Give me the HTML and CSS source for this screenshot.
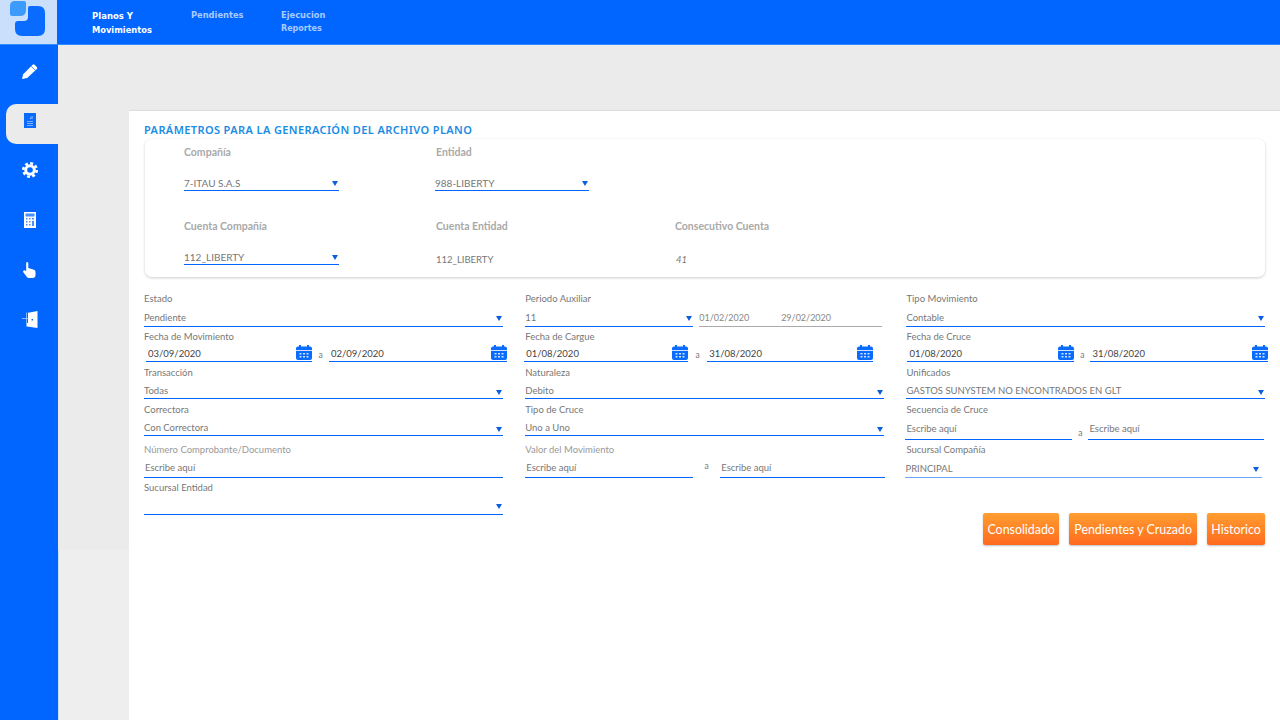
FILE: index.html
```html
<!DOCTYPE html>
<html lang="es">
<head>
  <meta charset="UTF-8">
  <meta name="viewport" content="width=device-width, initial-scale=1.0">
  <title>Parámetros archivo plano</title>
  <link rel="stylesheet" href="styles.css">
</head>
<body>
  <svg class="sprite" width="0" height="0">
    <symbol id="cal" viewBox="0 0 16 15">
      <path fill="#0a6cff" d="M0 3.5Q0 1.5 2 1.5H3V0H5V1.5H11V0H13V1.5H14Q16 1.5 16 3.5V13Q16 15 14 15H2Q0 15 0 13Z"/>
      <path fill="#fff" d="M0 5H16V5.8H0Z"/>
      <path fill="#cfe2ff" d="M3.5 8H5.5V9.6H3.5ZM7 8H9V9.6H7ZM10.5 8H12.5V9.6H10.5ZM3.5 11H5.5V12.6H3.5ZM7 11H9V12.6H7ZM10.5 11H12.5V12.6H10.5Z"/>
    </symbol>
  </svg>

  <header class="topbar">
    <div class="logo">
      <svg width="57" height="44" viewBox="0 0 57 44">
        <path fill="#0a6cff" d="M30 6H38Q45 6 45 13V29Q45 36 38 36H22Q15 36 15 29V24Q15 21 18 21H24Q28 21 28 17V8Q28 6 30 6Z"/>
        <path fill="#3d9bfb" d="M15 1H24Q26 1 26 3V10Q26 16 20 16H12Q10 16 10 14V6Q10 1 15 1Z"/>
      </svg>
    </div>
    <nav class="menu">
      <a class="menu-item active"><b>Planos Y</b><span>Movimientos</span></a>
      <a class="menu-item"><b>Pendientes</b></a>
      <a class="menu-item"><b>Ejecucion</b><span>Reportes</span></a>
    </nav>
  </header>

  <div class="layout">
    <aside class="sidebar">
      <div class="side-item">
        <svg width="16" height="16" viewBox="0 0 16 16"><path fill="#fff" d="M0 16L1.2 11.2L10.6 1.7Q11.6.8 12.6 1.7L14.8 3.9Q15.7 4.9 14.8 5.9L5.2 15Z"/><path stroke="#0066ff" stroke-width=".7" d="M9.2 3.2L13.2 7.2"/></svg>
      </div>
      <div class="side-item current">
        <svg width="12" height="15" viewBox="0 0 12 15"><path fill="#0a6cff" d="M0 0H12V15H0Z"/><path fill="#9cc4ff" d="M6 4.500H7V6H6ZM7.500 3H8.500V6H7.500ZM3 8H9V8.700H3ZM3 10H9V10.700H3ZM3 12H9V12.700H3Z"/></svg>
      </div>
      <div class="side-item">
        <svg width="16" height="16" viewBox="0 0 16 16"><circle cx="8" cy="8" r="4.300" fill="none" stroke="#fff" stroke-width="3"/><circle cx="8" cy="8" r="6.700" fill="none" stroke="#fff" stroke-width="2.600" stroke-dasharray="2.900 2.362"/></svg>
      </div>
      <div class="side-item">
        <svg width="12" height="16" viewBox="0 0 12 16"><path fill="#fff" d="M0 0H12V16H0Z"/><path fill="#0a6cff" d="M1.500 1.500H10.500V4.500H1.500ZM2 6H3.500V7.500H2ZM5 6H6.500V7.500H5ZM8 6H10V7.500H8ZM2 9H3.500V10.500H2ZM5 9H6.500V10.500H5ZM8 9H10V14H8ZM2 12H3.500V13.500H2ZM5 12H6.500V13.500H5Z" opacity=".75"/></svg>
      </div>
      <div class="side-item">
        <svg width="13" height="16" viewBox="0 0 13 16"><path fill="#fff" d="M3.200 1.200Q3.200 0 4.200 0T5.300 1.200V6L11 7.800Q12.500 8.300 12.500 10V13Q12.500 16 9.500 16H6Q4.500 16 3.500 14.500L.3 10.200Q-.3 9 .8 8.400T3.200 9.500Z"/></svg>
      </div>
      <div class="side-item">
        <svg width="16" height="17" viewBox="0 0 16 17"><path fill="#fff" d="M5 2L15.500 0V17L5 15.500V12H6V2Z"/><path fill="#0066ff" d="M9.500 8H11V9.500H9.500Z"/><path fill="none" stroke="#a9cdff" stroke-width=".8" d="M0 7.500H6.500M4.500 1.500V15.500"/></svg>
      </div>
    </aside>

    <div class="gutter"><div class="gutter-low"></div></div>

    <main class="content">
      <section class="panel">
        <h2 class="panel-title">PARÁMETROS PARA LA GENERACIÓN DEL ARCHIVO PLANO</h2>

        <div class="account-card">
          <div class="account-field">
            <label class="account-label">Compañía</label>
            <div class="select account-select">7-ITAU S.A.S</div>
          </div>
          <div class="account-field">
            <label class="account-label">Entidad</label>
            <div class="select account-select">988-LIBERTY</div>
          </div>
          <div></div>
          <div class="account-field">
            <label class="account-label">Cuenta Compañía</label>
            <div class="select account-select">112_LIBERTY</div>
          </div>
          <div class="account-field">
            <label class="account-label">Cuenta Entidad</label>
            <div class="account-value">112_LIBERTY</div>
          </div>
          <div class="account-field">
            <label class="account-label">Consecutivo Cuenta</label>
            <div class="account-value italic">41</div>
          </div>
        </div>

        <div class="filters">
          <div class="field">
            <label>Estado</label>
            <div class="select">Pendiente</div>
          </div>
          <div class="field">
            <label>Periodo Auxiliar</label>
            <div class="period">
              <div class="select">11</div>
              <div class="period-range"><span>01/02/2020</span><span>29/02/2020</span></div>
            </div>
          </div>
          <div class="field">
            <label>Tipo Movimiento</label>
            <div class="select">Contable</div>
          </div>

          <div class="field">
            <label>Fecha de Movimiento</label>
            <div class="dates dates-a">
              <div class="date">03/09/2020<svg width="16" height="15"><use href="#cal"/></svg></div>
              <span class="sep">a</span>
              <div class="date">02/09/2020<svg width="16" height="15"><use href="#cal"/></svg></div>
            </div>
          </div>
          <div class="field">
            <label>Fecha de Cargue</label>
            <div class="dates dates-b">
              <div class="date">01/08/2020<svg width="16" height="15"><use href="#cal"/></svg></div>
              <span class="sep">a</span>
              <div class="date">31/08/2020<svg width="16" height="15"><use href="#cal"/></svg></div>
            </div>
          </div>
          <div class="field">
            <label>Fecha de Cruce</label>
            <div class="dates dates-c">
              <div class="date">01/08/2020<svg width="16" height="15"><use href="#cal"/></svg></div>
              <span class="sep">a</span>
              <div class="date">31/08/2020<svg width="16" height="15"><use href="#cal"/></svg></div>
            </div>
          </div>

          <div class="field">
            <label>Transacción</label>
            <div class="select short">Todas</div>
          </div>
          <div class="field">
            <label>Naturaleza</label>
            <div class="select short">Debito</div>
          </div>
          <div class="field">
            <label>Unificados</label>
            <div class="select short">GASTOS SUNYSTEM NO ENCONTRADOS EN GLT</div>
          </div>

          <div class="field">
            <label>Correctora</label>
            <div class="select short">Con Correctora</div>
          </div>
          <div class="field">
            <label>Tipo de Cruce</label>
            <div class="select short">Uno a Uno</div>
          </div>
          <div class="field">
            <label>Secuencia de Cruce</label>
            <div class="inputs inputs-seq">
              <div class="input">Escribe aquí</div>
              <span class="sep">a</span>
              <div class="input">Escribe aquí</div>
            </div>
          </div>

          <div class="field">
            <label class="faint">Número Comprobante/Documento</label>
            <div class="input">Escribe aquí</div>
          </div>
          <div class="field">
            <label class="faint">Valor del Movimiento</label>
            <div class="inputs inputs-val">
              <div class="input">Escribe aquí</div>
              <span class="sep">a</span>
              <div class="input">Escribe aquí</div>
            </div>
          </div>
          <div class="field">
            <label>Sucursal Compañía</label>
            <div class="select pale">PRINCIPAL</div>
          </div>

          <div class="field">
            <label>Sucursal Entidad</label>
            <div class="select last"></div>
          </div>
          <div class="actions">
            <button class="btn">Consolidado</button>
            <button class="btn btn-wide">Pendientes y Cruzado</button>
            <button class="btn">Historico</button>
          </div>
        </div>
      </section>
    </main>
  </div>
</body>
</html>
```

FILE: styles.css
```css
* {
  box-sizing: border-box;
}
html, body {
  height: 100%;
}
body {
  margin: 0;
  background: #ebebeb;
  font-family: "Lato", "Open Sans", sans-serif;
  font-size: 9.5px;
  color: #666;
  overflow: hidden;
}
.sprite {
  display: block;
}

/* top bar */
.topbar {
  display: flex;
  height: 45px;
  background: #0066ff;
  border-bottom: 1px solid #2f8dff;
}
.logo {
  width: 57px;
  height: 44px;
  background: #c9dffb;
}
.logo svg {
  display: block;
}
.menu {
  display: flex;
  padding-left: 35px;
  font-family: "DejaVu Sans", sans-serif;
}
.menu-item {
  display: flex;
  flex-direction: column;
  gap: 2px;
  padding-top: 10px;
  color: #a9cbff;
  font-size: 8.3px;
  line-height: 11px;
  font-weight: bold;
}
.menu-item span {
  font-size: 8px;
}
.menu-item:nth-child(1) {
  width: 99px;
}
.menu-item:nth-child(2) {
  width: 90px;
}
.menu-item.active {
  color: #fff;
  padding-top: 11px;
}
.menu-item.active b {
  font-size: 8.5px;
}
.menu-item.active span {
  font-size: 8.3px;
  padding-top: 1px;
}

/* side menu */
.layout {
  display: flex;
  height: 675px;
}
.sidebar {
  width: 58px;
  flex: none;
  background: #0066ff;
  padding: 1px 0 0 6px;
}
.side-item {
  height: 49.7px;
  padding-right: 5px;
  display: flex;
  align-items: center;
  justify-content: center;
}
.side-item.current {
  height: 40px;
  margin: 8px 0 1.7px;
  padding-bottom: 6px;
  background: #ebebeb;
  border-radius: 10px 0 0 10px;
}
.gutter {
  width: 71px;
  flex: none;
  display: flex;
  flex-direction: column;
  justify-content: flex-end;
}
.gutter-low {
  height: 170px;
  background: #eee;
  border-left: 1px solid #cfe0fb;
}

/* main panel */
.content {
  flex: 1;
  padding-top: 65px;
}
.panel {
  height: 100%;
  background: #fff;
  border-top: 1px solid #ddd;
  padding: 0 15px;
}
.panel-title {
  margin: 0;
  height: 28px;
  padding-top: 11px;
  font-family: "Noto Sans", sans-serif;
  font-size: 11px;
  line-height: 15px;
  font-weight: 600;
  letter-spacing: .39px;
  color: #1a8ce6;
  white-space: nowrap;
}

/* account card */
.account-card {
  display: grid;
  grid-template-columns: 252px 239px 1fr;
  grid-template-rows: 45px 45px;
  row-gap: 29px;
  height: 138px;
  margin-left: 1px;
  padding: 7px 0 0 39px;
  border-radius: 7px;
  box-shadow: 0 1px 3px rgba(0, 0, 0, .2);
}
.account-field {
  display: flex;
  flex-direction: column;
}
.account-label {
  height: 12px;
  line-height: 12px;
  font-size: 10.5px;
  font-weight: bold;
  color: #a9a9a9;
}
.select.account-select {
  width: 155px;
  height: 33px;
  padding-bottom: 1px;
  font-size: 10px;
}
.account-select::after {
  margin-bottom: 4px;
}
.account-field:nth-child(2) .select {
  width: 154px;
  margin-left: -1px;
}
.account-value {
  padding-top: 22px;
  font-size: 9.5px;
  line-height: 12px;
  color: #777;
}
.account-value.italic {
  padding-left: 1px;
  font-style: italic;
}

/* filter grid */
.filters {
  display: grid;
  grid-template-columns: repeat(3, 1fr);
  grid-template-rows: 38px 36px 37px 40px 38px 37px 26px;
  column-gap: 22.7px;
  margin-top: 16px;
}
.field {
  min-width: 0;
}
.field label {
  display: block;
  height: 12px;
  line-height: 12px;
  color: #777;
  white-space: nowrap;
}
.field label.faint {
  color: #999;
}
.select {
  display: flex;
  align-items: flex-end;
  justify-content: space-between;
  height: 22px;
  padding: 0 1px 2px 0;
  border-bottom: 1px solid #0066ff;
  color: #777;
  line-height: 12px;
  white-space: nowrap;
}
.select::after {
  content: "";
  flex: none;
  margin: 0 0 3px auto;
  border-left: 3.5px solid transparent;
  border-right: 3.5px solid transparent;
  border-top: 5px solid #0a5fe0;
}
.select.short {
  height: 20px;
  padding-bottom: 1px;
}
.select.short::after {
  margin-bottom: 2px;
}
.select.last {
  height: 21px;
}
.select.pale {
  width: 357px;
  margin-left: -1px;
  border-bottom-color: #6aa8ff;
}
.select.pale::after {
  margin-right: 2px;
}

.period {
  display: grid;
  grid-template-columns: 168px 183px;
  column-gap: 6px;
}
.period-range {
  display: flex;
  align-items: flex-end;
  gap: 32px;
  height: 22px;
  padding-bottom: 2px;
  border-bottom: 1px solid #aaa;
  font-size: 9px;
  line-height: 12px;
  color: #888;
}

.dates, .inputs {
  display: grid;
}
.dates-a {
  grid-template-columns: 166px 17px 178px;
  margin-left: 2px;
}
.dates-b {
  grid-template-columns: 164px 19px 166px;
  margin-left: -1px;
}
.dates-c {
  grid-template-columns: 167px 16px 178px;
  margin-left: 1px;
}
.date {
  display: flex;
  align-items: flex-end;
  justify-content: space-between;
  height: 19px;
  padding: 0 0 1px 2px;
  border-bottom: 1px solid #0066ff;
  line-height: 13px;
  color: #444;
}
.sep {
  align-self: end;
  text-align: center;
  font-size: 8.5px;
  line-height: 13px;
  color: #777;
}
.input {
  height: 22px;
  padding: 6px 1px 0;
  border-bottom: 1px solid #0066ff;
  line-height: 12px;
  color: #777;
}
.inputs-seq {
  grid-template-columns: 167px 16px 176px;
  margin-left: -1px;
}
.inputs-seq .input {
  height: 24px;
  padding-top: 7px;
}
.inputs-val {
  grid-template-columns: 168px 27px 165px;
}
.inputs-val .sep {
  align-self: start;
  padding-top: 4px;
}

/* buttons */
.actions {
  grid-column: 2 / -1;
  grid-row: 6 / span 2;
  display: flex;
  justify-content: flex-end;
  align-items: flex-end;
  gap: 10px;
}
.btn {
  height: 32px;
  padding: 0 4.2px;
  border: none;
  border-radius: 2px;
  background: linear-gradient(#ff9e30, #ff6a1f);
  box-shadow: 0 1px 2px rgba(0, 0, 0, .25);
  color: #fff;
  font-family: "Lato", "Open Sans", sans-serif;
  font-size: 12.4px;
  cursor: pointer;
}
.btn-wide {
  padding: 0 5.2px;
}
```
